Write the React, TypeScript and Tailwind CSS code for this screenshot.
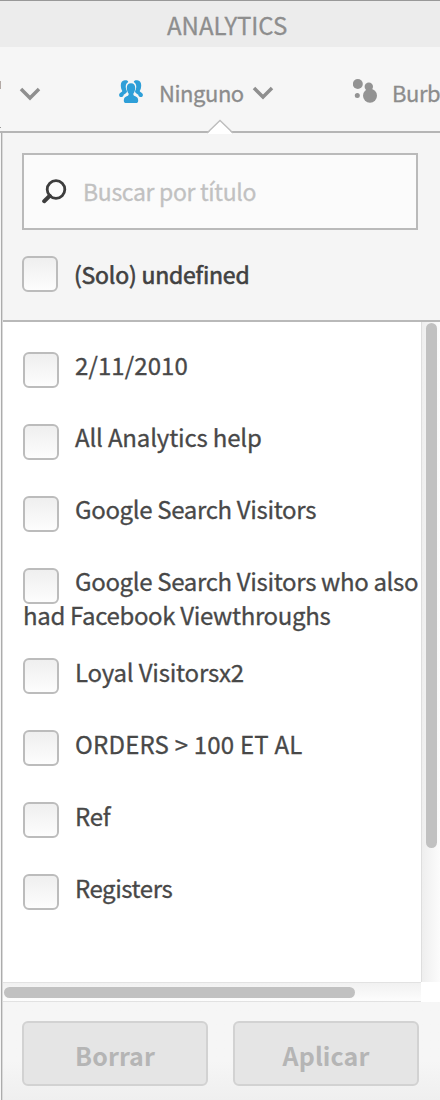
import React from "react";

const segments = [
  { label: "2/11/2010", spacing: "tracking-[0.1px]" },
  { label: "All Analytics help", spacing: "tracking-[-0.17px]" },
  { label: "Google Search Visitors", spacing: "tracking-[-0.34px]" },
  { label: "Google Search Visitors who also had Facebook Viewthroughs", spacing: "tracking-[-0.34px] pb-px" },
  { label: "Loyal Visitorsx2", spacing: "tracking-[-0.2px]" },
  { label: "ORDERS > 100 ET AL", spacing: "tracking-[0.2px]" },
  { label: "Ref", spacing: "tracking-[-0.3px]" },
  { label: "Registers", spacing: "tracking-[-0.45px]" },
];

function Checkbox() {
  return (
    <span className="block h-9 w-9 shrink-0 rounded-[6px] border-2 border-[#bcbcbc] bg-linear-to-b from-[#efefef] to-[#fdfdfd]" />
  );
}

function Chevron() {
  return (
    <svg className="block h-[14px] w-[22px] shrink-0" viewBox="0 0 22 14" fill="none" stroke="#8f8f8f" strokeWidth="3.5">
      <path d="M2 2 11 11 20 2" />
    </svg>
  );
}

function PeopleIcon() {
  return (
    <svg className="block h-6 w-6 shrink-0" viewBox="0 0 24 24" fill="#2e9fd8">
      <path d="M5.800.2C7.800 0 9.200.6 9.200 1.900 7.200 3.200 6.600 5.200 6.800 7.400c.1 1.500.6 2.700 1.200 3.800-.2 1.900-1.800 2.500-3.300 3.500-.3 1.400-.8 2.200-1.800 2.200H1.400C.2 16.900-.2 15 .4 13.800c.8-1.400 2.600-1.700 2.900-2.900C2.300 9.600 1.800 7.500 1.800 5.300 1.800 2.300 3.100.5 5.800.2Z" />
      <path d="M18.200.2C16.200 0 14.800.6 14.800 1.900 16.800 3.200 17.400 5.200 17.200 7.400c-.1 1.500-.6 2.700-1.200 3.800.2 1.900 1.800 2.500 3.300 3.500.3 1.400.8 2.200 1.800 2.200h1.500c1.200 0 1.600-1.900 1-3.100-.8-1.400-2.600-1.700-2.900-2.900 1-1.300 1.500-3.400 1.500-5.600 0-3-1.300-4.800-4-5.100Z" />
      <path d="M12 3.200c2.800 0 4.200 1.800 4.200 4.700 0 2.200-.7 4.200-1.800 5.500-.3 1.300.2 2.100 1.400 2.600 2.100.8 3.400 1.800 3.400 4.200 0 2.200-.8 2.900-2.500 2.900H7.300c-1.700 0-2.500-.7-2.500-2.900 0-2.400 1.300-3.400 3.400-4.200 1.200-.5 1.700-1.300 1.400-2.600-1.100-1.300-1.800-3.300-1.800-5.500 0-2.900 1.400-4.700 4.200-4.700Z" />
    </svg>
  );
}

function BubblesIcon() {
  return (
    <svg className="block h-6 w-6 shrink-0" viewBox="0 0 24 24" fill="#939393">
      <circle cx="4.800" cy="5" r="5" />
      <circle cx="4.300" cy="16.500" r="2.500" />
      <circle cx="15.800" cy="7.800" r="4.200" />
      <circle cx="17" cy="16.800" r="7" />
    </svg>
  );
}

export default function App() {
  return (
    <div className="flex h-[1100px] w-[440px] flex-col overflow-hidden bg-[#f6f6f6] font-['Noto_Sans_CJK_JP','Open_Sans',sans-serif] text-[24px] text-[#484848]">
      <header className="flex h-[47px] shrink-0 items-center border-t border-[#989898] bg-[#ececec] pt-[2px] pl-[167px] text-[#8e8e8e]">
        <span className="whitespace-nowrap leading-[34px] [-webkit-text-stroke:0.3px_#8e8e8e]">ANALYTICS</span>
      </header>

      <nav className="flex h-[84px] shrink-0 items-start text-[22px] tracking-[-0.45px] text-[#8c8c8c] [-webkit-text-stroke:0.3px_#8c8c8c]">
        <div className="flex w-[119px] shrink-0 pt-[34px]">
          <div className="flex h-[47px] w-[1px] shrink-0 flex-col justify-between">
            <span className="h-[8px] bg-[#b3aaa6]" />
            <span className="h-px bg-[#999999]" />
          </div>
          <div className="pt-[6px] pl-[18px]"><Chevron /></div>
        </div>
        <div className="pt-[33px]"><PeopleIcon /></div>
        <span className="ml-[16px] w-[93px] shrink-0 whitespace-nowrap pt-[28px] leading-[34px]">Ninguno</span>
        <div className="pt-[39px]"><Chevron /></div>
        <div className="ml-[79px] pt-[32px]"><BubblesIcon /></div>
        <span className="ml-[15px] whitespace-nowrap pt-[28px] leading-[34px]">Burb</span>
      </nav>

      <section className="relative flex min-h-0 flex-1 flex-col border-t-2 border-[#b5b5b5]">
        <svg className="absolute -top-[14px] left-[207px] h-[15px] w-[26px]" viewBox="0 0 26 15">
          <path d="M0 15 13 2 26 15Z" fill="#fff" />
          <path d="M0 14 13 1.500 26 14" fill="none" stroke="#bdbdbd" strokeWidth="1.300" />
        </svg>
        <div className="ml-px flex min-h-0 flex-1 flex-col border-l border-[#acacac]">
          <div className="flex min-h-0 flex-1 flex-col border-l border-[#dadada]">
            <div className="flex h-[189px] shrink-0 flex-col border-b-2 border-[#b9b9b9] bg-[#f5f5f5] pt-[20px] pl-[19px]">
              <div className="flex h-[77px] w-[396px] shrink-0 items-center border-2 border-[#bababa] bg-[#fbfbfb] pl-[17px]">
                <svg className="block h-[25px] w-[26px] shrink-0" viewBox="0 0 26 25" fill="none" stroke="#3d3d3d">
                  <circle cx="15" cy="10.500" r="8.800" strokeWidth="2.800" />
                  <path d="M8.800 16.800 3.200 22.200" strokeWidth="4" strokeLinecap="round" />
                </svg>
                <span className="ml-[16px] whitespace-nowrap pb-[2px] text-[23px] leading-[34px] tracking-[-0.33px] text-[#c1c1c1] [-webkit-text-stroke:0.3px_#c1c1c1]">Buscar por título</span>
              </div>
              <div className="mt-[26px] flex items-center">
                <Checkbox />
                <span className="ml-[16px] whitespace-nowrap text-[23px] leading-[34px] tracking-[-0.2px] text-[#414141] [-webkit-text-stroke:0.6px_#414141]">(Solo) undefined</span>
              </div>
            </div>

            <div className="flex h-[660px] shrink-0">
              <ul className="w-[418px] shrink-0 bg-white pt-[26px] pl-5 [-webkit-text-stroke:0.3px_#484848]">
                {segments.map(({ label, spacing }, index) => (
                  <li key={label} className={`mb-[22px] min-h-[50px] leading-[34px] ${spacing}`}>
                    <div className={`float-left mr-[16px] h-[34px] ${index < 4 ? "pt-[4px]" : "pt-[3px]"}`}><Checkbox /></div>
                    {label}
                  </li>
                ))}
              </ul>
              <div className="w-[19px] border-l border-[#dedede] bg-linear-to-r from-[#eeeeee] to-[#fcfcfc] pt-px pl-[4px]">
                <div className="h-[525px] w-[11px] rounded-full bg-[#c1c1c1]" />
              </div>
            </div>

            <div className="flex h-[20px] shrink-0 bg-white">
              <div className="w-[418px] border-y border-[#e2e2e2] bg-linear-to-b from-[#f1f1f1] to-[#fdfdfd] pt-[4px] pl-px">
                <div className="h-[11px] w-[351px] rounded-full bg-[#c1c1c1]" />
              </div>
            </div>

            <footer className="flex flex-1 gap-[25px] bg-linear-to-b from-[#f6f6f6] from-60% to-[#efefef] pt-[19px] pl-[19px] text-[25px] font-bold tracking-[0.1px] text-[#b5b5b5]">
              <button className="h-[65px] w-[186px] rounded-[6px] border-2 border-[#d2d2d2] bg-[#e5e5e5] pt-[5px]">Borrar</button>
              <button className="h-[65px] w-[186px] rounded-[6px] border-2 border-[#d2d2d2] bg-[#e5e5e5] pt-[5px]">Aplicar</button>
            </footer>
          </div>
        </div>
      </section>
    </div>
  );
}
